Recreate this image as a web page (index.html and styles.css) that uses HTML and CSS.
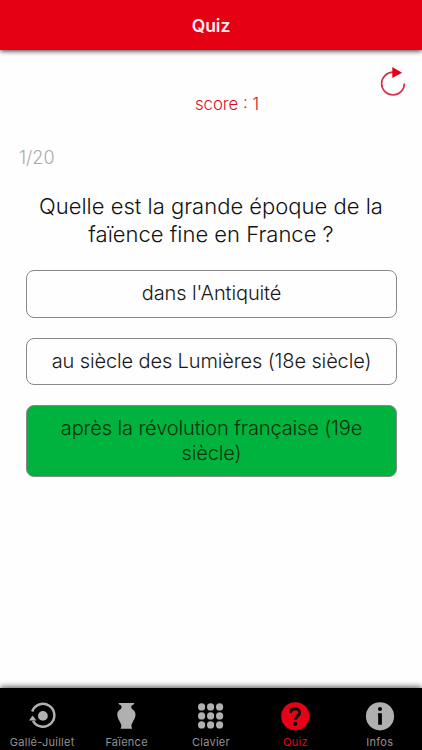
FILE: index.html
```html
<!DOCTYPE html>
<html lang="fr">
<head>
<meta charset="utf-8">
<title>Quiz</title>
<link rel="stylesheet" href="styles.css">
</head>
<body>
<div class="app">
  <header class="header"><h1>Quiz</h1></header>
  <main class="content">
    <button class="restart" aria-label="Recommencer">
      <svg width="28" height="32" viewBox="0 0 28 32"><path d="M14 6.200A11.400 11.400 0 1 0 25.400 17.600" fill="none" stroke="#d93048" stroke-width="1.700"/><path d="M13.300 1v11l9.800-5.300z" fill="#e40016"/></svg>
    </button>
    <p class="score">score : 1</p>
    <p class="progress">1/20</p>
    <h2 class="question">Quelle est la grande époque de la<br>faïence fine en France ?</h2>
    <div class="answers">
      <button class="answer">dans l'Antiquité</button>
      <button class="answer">au siècle des Lumières (18e siècle)</button>
      <button class="answer correct">après la révolution française (19e<br>siècle)</button>
    </div>
  </main>
  <nav class="tabs">
    <a class="tab"><svg width="30" height="30" viewBox="0 0 30 30"><path d="M5.200 10.500A11.400 11.400 0 1 1 6 19.800" fill="none" stroke="currentColor" stroke-width="2.500"/><circle cx="15.900" cy="14.900" r="4.900" fill="currentColor"/><path d="M2 19.600L5.600 14.600l3.800 4.800z" fill="currentColor"/></svg><span>Gallé-Juillet</span></a>
    <a class="tab"><svg width="30" height="30" viewBox="0 0 30 30"><path d="M6.700 2h15.400v1.300c-1.700.4-2.900 1.300-2.900 2.900 0 2.600 4.300 2.300 4.300 7.300 0 4.800-3.800 7.800-4.100 11.200 0 1.400.7 1.900.7 3.100H8.700c0-1.200.7-1.700.7-3.100-.3-3.400-4.100-6.400-4.100-11.200 0-5 4.300-4.700 4.300-7.300 0-1.600-1.200-2.500-2.900-2.900z" fill="currentColor"/></svg><span>Faïence</span></a>
    <a class="tab"><svg width="30" height="30" viewBox="0 0 30 30"><g fill="currentColor"><circle cx="5.600" cy="5.900" r="3.600"/><circle cx="14.600" cy="5.900" r="3.600"/><circle cx="23.600" cy="5.900" r="3.600"/><circle cx="5.600" cy="14.900" r="3.600"/><circle cx="14.600" cy="14.900" r="3.600"/><circle cx="23.600" cy="14.900" r="3.600"/><circle cx="5.600" cy="23.900" r="3.600"/><circle cx="14.600" cy="23.900" r="3.600"/><circle cx="23.600" cy="23.900" r="3.600"/></g></svg><span>Clavier</span></a>
    <a class="tab active"><svg width="30" height="30" viewBox="0 0 30 30"><circle cx="15.300" cy="15.300" r="14.100" fill="currentColor"/><path d="M10.400 11.800c.1-2.500 1.900-4 4.600-4 2.700 0 4.700 1.500 4.700 3.800 0 3.200-4.400 3.200-4.400 7" fill="none" stroke="#000" stroke-width="2.900"/><circle cx="15.200" cy="22.700" r="2" fill="#000"/></svg><span>Quiz</span></a>
    <a class="tab"><svg width="30" height="30" viewBox="0 0 30 30"><circle cx="15" cy="15.300" r="14.100" fill="currentColor"/><circle cx="15" cy="8" r="2" fill="#000"/><path d="M12.900 12.300h4v11.400h-3.700v-10h-.3z" fill="#000"/></svg><span>Infos</span></a>
  </nav>
</div>
</body>
</html>
```
FILE: styles.css
```css
* { box-sizing: border-box; }
body { margin: 0; font-family: Inter, "Liberation Sans", sans-serif; background: #fefefe; }
button { font: inherit; color: inherit; padding: 0; background: none; border: 0; }
h1, h2, p { margin: 0; }
.app { height: 750px; display: flex; flex-direction: column; overflow: hidden; }
.header { height: 50px; background: #e60014; box-shadow: 0 1px 5px rgba(0,0,0,.8); display: flex; justify-content: center; }
.header h1 { font-size: 17.500px; line-height: 52px; font-weight: 600; color: #fff0f0; }
.content { flex: 1; display: flex; flex-direction: column; padding: 16px 25px 0 26px; font-weight: 300; }
.restart { align-self: flex-end; width: 28px; height: 32px; margin-right: -10px; }
.restart svg { display: block; }
.score { text-align: center; font-size: 16.800px; line-height: 20px; margin-top: -4px; color: #d50f2a; padding-left: 31px; }
.progress { font-size: 18px; line-height: 22px; margin: 33px 0 0 -7px; color: #aaa; }
.question { margin-top: 23px; font-size: 22px; line-height: 28px; font-weight: 300; text-align: center; color: #111; white-space: nowrap; }
.question { padding-right: 1px; }
.answers { display: flex; flex-direction: column; gap: 20px; margin-top: 22px; }
.answer { height: 47.500px; border: 1px solid #888; border-radius: 8px; font-size: 20px; letter-spacing: -.12px; line-height: 25px; color: #181818; white-space: nowrap; text-align: center; }
.correct { height: 72px; background: #00b33e; color: #07340b; }
.tabs { height: 62px; background: #000; box-shadow: 0 -1px 6px rgba(0,0,0,.7); display: grid; grid-template-columns: repeat(5, 1fr); }
.tab { display: flex; flex-direction: column; align-items: center; padding-top: 13px; color: #b0b0b0; font-size: 11px; line-height: 14px; white-space: nowrap; }
.tab svg { display: block; }
.tab span { margin-top: 4px; color: #929292; letter-spacing: .25px; }
.tab.active, .tab.active span { color: #e60018; }
```
